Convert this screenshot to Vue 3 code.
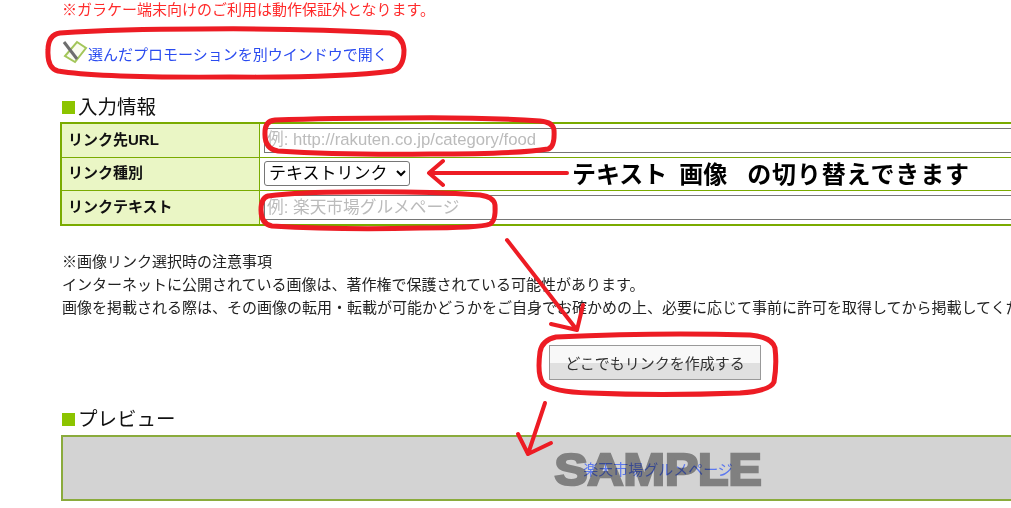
<script setup>
const notes = [
  '※画像リンク選択時の注意事項',
  'インターネットに公開されている画像は、著作権で保護されている可能性があります。',
  '画像を掲載される際は、その画像の転用・転載が可能かどうかをご自身でお確かめの上、必要に応じて事前に許可を取得してから掲載してください。',
]
</script>

<template>
  <div class="page">
    <p class="warning">※ガラケー端末向けのご利用は動作保証外となります。</p>

    <a class="open-link" href="#">
      <svg class="pen-icon" width="26" height="28" viewBox="0 0 26 28">
        <path d="M15 3 L24 9 L13 23 L3 17 Z" fill="#fafcf0" stroke="#a3c65a" stroke-width="2" />
        <path d="M2 3 L15 20" stroke="#6e6e6e" stroke-width="3" />
      </svg>
      <span>選んだプロモーションを別ウインドウで開く</span>
    </a>

    <h2 class="section-title input-title">入力情報</h2>
    <table class="form-table">
      <tbody>
        <tr>
          <th>リンク先URL</th>
          <td><input type="text" placeholder="例: http://rakuten.co.jp/category/food" /></td>
        </tr>
        <tr>
          <th>リンク種別</th>
          <td>
            <select>
              <option>テキストリンク</option>
              <option>画像リンク</option>
            </select>
          </td>
        </tr>
        <tr>
          <th>リンクテキスト</th>
          <td><input type="text" placeholder="例: 楽天市場グルメページ" /></td>
        </tr>
      </tbody>
    </table>

    <div class="notes">
      <p v-for="note in notes" :key="note">{{ note }}</p>
    </div>

    <div class="button-row">
      <button class="create-btn">どこでもリンクを作成する</button>
    </div>

    <h2 class="section-title preview-title">プレビュー</h2>
    <div class="preview">
      <a href="#">楽天市場グルメページ</a>
      <span class="sample">SAMPLE</span>
    </div>

    <!-- 赤い手書きの注釈 -->
    <svg class="marks" width="1011" height="508" viewBox="0 0 1011 508">
      <g fill="none" stroke="#ed1c24" stroke-width="5" stroke-linecap="round" stroke-linejoin="round">
        <path d="M60 33 Q48 35 48 50 Q47 68 58 71 Q100 78 230 77 Q340 78 392 71 Q404 68 404 50 Q403 36 390 33 Q300 28 200 29 Q120 29 60 33 Z" />
        <path d="M275 120 Q265 121 265 132 Q264 149 278 151 Q340 155 430 154 Q520 154 548 149 Q555 147 554 130 Q553 122 540 121 Q480 117 400 118 Q330 118 275 120 Z" />
        <path d="M268 196 Q261 198 261 210 Q261 224 272 226 Q340 230 420 228 Q480 228 490 224 Q496 221 495 205 Q494 197 480 195 Q420 191 350 192 Q300 192 268 196 Z" />
        <path d="M556 337 Q542 340 540 352 Q537 375 543 383 Q552 392 590 393 Q660 396 740 393 Q770 391 774 382 Q777 365 775 348 Q772 337 750 335 Q660 332 556 337 Z" />
      </g>
      <g fill="none" stroke="#ed1c24" stroke-width="4" stroke-linecap="round" stroke-linejoin="round">
        <path d="M567 173 L430 173 M443 161 L429 173 L443 185" />
        <path d="M507 240 L577 330 M551 324 L577 330 L583 305" />
        <path d="M545 403 L528 454 M518 434 L528 454 L551 443" />
      </g>
    </svg>
    <p class="switch-note">
      <span>テキスト</span><span class="image-word">画像</span><span class="rest-word">の切り替えできます</span>
    </p>
  </div>
</template>

<style scoped>
.page {
  position: relative;
  width: 1011px;
  height: 508px;
  overflow: hidden;
  padding-left: 62px;
  box-sizing: border-box;
  background: #fff;
  color: #222;
  font-family: "Liberation Sans", "Noto Sans CJK JP", sans-serif;
}
p {
  margin: 0;
}
.warning {
  height: 20px;
  line-height: 20px;
  font-size: 15px;
  color: #ff2a2a;
}
.open-link {
  display: flex;
  align-items: center;
  height: 28px;
  margin-top: 19px;
  font-size: 15px;
  color: #2a4bf0;
  text-decoration: none;
}
.pen-icon {
  flex: none;
}
.section-title {
  margin: 0;
  height: 24px;
  line-height: 24px;
  font-size: 19.5px;
  font-weight: 400;
  color: #111;
}
.section-title::before {
  content: "";
  display: inline-block;
  width: 13px;
  height: 13px;
  margin-right: 3px;
  background: #8cc400;
}
.input-title {
  margin-top: 28px;
}
.form-table {
  width: 1194px;
  height: 104px;
  margin: 3px 0 0 -2px;
  border-collapse: collapse;
  border: 2px solid #7aab00;
}
.form-table th,
.form-table td {
  border: 1px solid #7aab00;
  padding: 0 4px;
}
.form-table th {
  width: 187px;
  background: #eaf6c5;
  text-align: left;
  font-size: 15px;
  font-weight: 700;
  color: #111;
  padding: 0 4px 4px 6px;
}
.form-table input {
  display: block;
  width: 100%;
  height: 25px;
  box-sizing: border-box;
  border: 1px solid #767676;
  border-width: 1px 0 1px 1px;
  padding: 0 2px;
  font-family: inherit;
  font-size: 16.7px;
}
.form-table input::placeholder {
  color: #bbb;
}
.form-table select {
  display: block;
  width: 146px;
  height: 25px;
  padding: 0;
  border: 1px solid #767676;
  border-radius: 3px;
  font-family: inherit;
  font-size: 17px;
  line-height: 22px;
  color: #000;
  background: #fff;
}
.notes {
  margin-top: 24px;
  font-size: 15px;
  line-height: 23px;
  white-space: nowrap;
}
.button-row {
  width: 1186px;
  display: flex;
  justify-content: center;
  margin-top: 26px;
}
.create-btn {
  width: 212px;
  height: 35px;
  border: 1px solid #999;
  background: linear-gradient(#f8f8f8 0 50%, #e0e0e0 50% 100%);
  font-family: inherit;
  font-size: 15px;
  color: #333;
}
.preview-title {
  margin-top: 27px;
}
.preview {
  position: relative;
  width: 1194px;
  height: 66px;
  margin: 4px 0 0 -1px;
  box-sizing: border-box;
  border: 2px solid #8aab3c;
  background: #d3d3d3;
  display: flex;
  align-items: center;
  justify-content: center;
}
.preview a {
  font-size: 15px;
  color: #5c78ee;
  text-decoration: none;
}
.sample {
  position: absolute;
  left: 50%;
  top: 13px;
  transform: translateX(-50%) scaleX(1.13);
  font-size: 44px;
  line-height: 40px;
  font-weight: 700;
  color: #9b9b9b;
  -webkit-text-stroke: 2.5px #9b9b9b;
  mix-blend-mode: multiply;
}
.marks {
  position: absolute;
  left: 0;
  top: 0;
  pointer-events: none;
}
.switch-note {
  position: absolute;
  left: 572px;
  top: 158px;
  line-height: 34px;
  font-size: 24px;
  font-weight: 700;
  color: #000;
  white-space: nowrap;
}
.image-word {
  margin-left: 12px;
}
.rest-word {
  margin-left: 20px;
  letter-spacing: 0.8px;
}
</style>

<style>
html,
body {
  margin: 0;
  overflow: hidden;
}
</style>
